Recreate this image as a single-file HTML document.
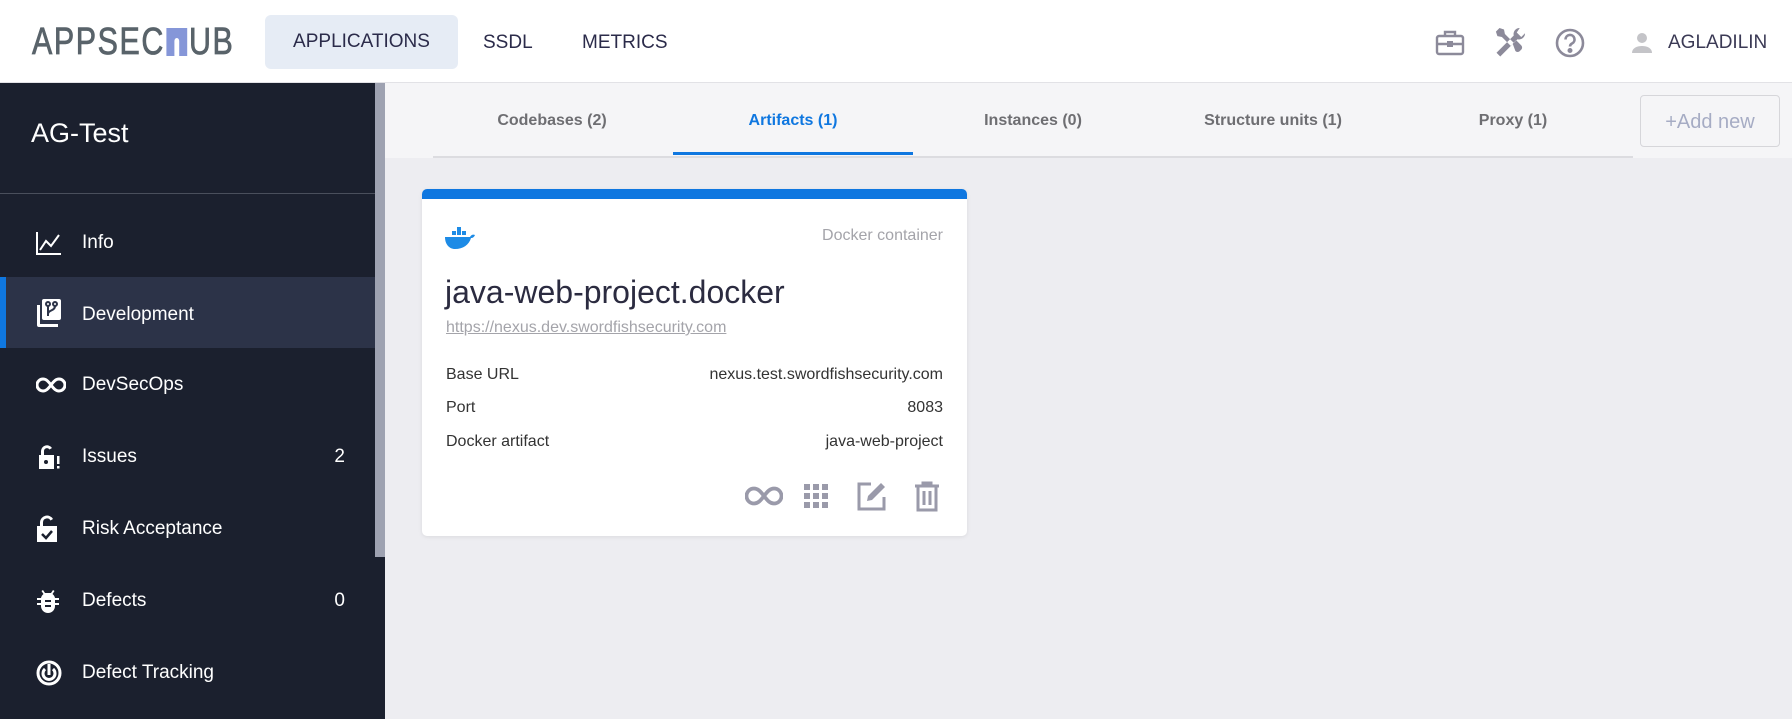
<!DOCTYPE html>
<html><head><meta charset="utf-8"><style>
*{box-sizing:border-box;margin:0;padding:0}
body{width:1792px;height:719px;overflow:hidden;font-family:"Liberation Sans",sans-serif;background:#ededf1;position:relative}
.abs{position:absolute}
#hdr{left:0;top:0;width:1792px;height:83px;background:#fff;border-bottom:1px solid #e2e2e6}
.logo{left:32px;top:21px;font-size:38px;letter-spacing:2px;color:#59636a;transform:scaleX(.8);transform-origin:left;-webkit-text-stroke:.8px #59636a}
.nav{top:16px;height:54px;line-height:54px;font-size:19px;color:#2b2b4a;font-weight:500}
#side{left:0;top:83px;width:385px;height:636px;background:#1b202e}
.mi{position:absolute;left:0;width:375px;height:70px;color:#fff;font-size:19px}
.mi span{position:absolute;left:82px;top:50%;transform:translateY(-50%)}
.mi b{position:absolute;right:30px;top:50%;transform:translateY(-50%);font-weight:normal}
.mi svg{position:absolute;left:36px;top:50%;transform:translateY(-50%)}
#tabs{left:385px;top:83px;width:1407px;height:75px;background:#f5f5f7}
.tab{top:112px;font-size:16px;font-weight:bold;color:#6e6e72;transform:translateX(-50%)}
.card{left:422px;top:189px;width:545px;height:347px;background:#fff;border-radius:5px;box-shadow:0 1px 4px rgba(0,0,0,.08);overflow:hidden}
.row{position:absolute;left:24px;right:24px;font-size:16px;color:#333}
.row i{float:right;font-style:normal}
</style></head><body>
<div id="hdr" class="abs"></div>
<div class="abs logo">APPSEC<span style="display:inline-block;width:26px;height:28px;background:#8596d8;vertical-align:-2px;position:relative;margin:0 2px;-webkit-text-stroke:0"><span style="position:absolute;left:10px;top:10px;width:6px;height:18px;background:#fff;border-radius:3px 3px 0 0"></span></span>UB</div>
<div class="abs nav" style="left:265px;width:193px;background:#e6ecf5;border-radius:6px;text-align:center;top:15px">APPLICATIONS</div>
<div class="abs nav" style="left:483px">SSDL</div>
<div class="abs nav" style="left:582px">METRICS</div>
<svg class="abs" style="left:1435px;top:29px" width="30" height="28" viewBox="0 0 30 28" fill="none" stroke="#8c8a9a" stroke-width="2.4"><rect x="2" y="7" width="26" height="18" rx="2"/><path d="M10 7V3h10v4M2 15h26"/><rect x="12" y="12" width="6" height="6" fill="#8c8a9a" stroke="none"/></svg>
<svg class="abs" style="left:1492px;top:25px" width="36" height="36" viewBox="0 0 24 24" fill="#8c8a9a"><path d="M13.8 12.5l2.3-2.3 3.4 3.4a2 2 0 0 1-.1 2.9l-.9.9a2 2 0 0 1-2.9-.1l-1.8-4.8zM5 2l3 1 .6 3 6 6-2 2-6-6-3-.6-1-3zm13.5 0a4 4 0 0 0-4 5L3 18.5 5.5 21 17 9.5a4 4 0 0 0 5-4l-2.5 2.5-3-3z"/></svg>
<svg class="abs" style="left:1554px;top:27px" width="32" height="32" viewBox="0 0 32 32" fill="none" stroke="#8c8a9a" stroke-width="2.6"><circle cx="16" cy="16" r="13"/><path d="M11.5 12.5a4.5 4.5 0 1 1 6.5 4c-1.5.8-2 1.6-2 3"/><circle cx="16" cy="23.5" r="1.2" fill="#8c8a9a"/></svg>
<svg class="abs" style="left:1631px;top:32px" width="22" height="22" viewBox="0 0 22 22" fill="#c4c4c8"><circle cx="11" cy="6" r="5"/><path d="M1 21c0-5 5-7 10-7s10 2 10 7z"/></svg>
<div class="abs" style="left:1668px;top:32px;font-size:19px;color:#3b3a55;font-weight:500">AGLADILIN</div>

<div id="side" class="abs">
<div class="abs" style="left:31px;top:35px;color:#fff;font-size:27px">AG-Test</div>
<div class="abs" style="left:0;top:110px;width:375px;height:1px;background:#4a4f5c"></div>
<div class="abs" style="left:375px;top:0;width:10px;height:474px;background:#9ea2b1"></div>
<div class="mi" style="top:125px"><svg width="26" height="24" viewBox="0 0 26 24" fill="none" stroke="#fff" stroke-width="2"><path d="M1 1v22h24M4 19l6-9 5 5 8-11"/></svg><span>Info</span></div>
<div class="mi" style="top:194px;height:71px;background:#2c3348"><div class="abs" style="left:0;top:0;width:6px;height:71px;background:#0f77e0"></div><svg width="26" height="30" viewBox="0 0 26 30" fill="#fff"><rect x="6" y="1" width="19" height="21" rx="2"/><path d="M1 7h3v19h18v3H3a2 2 0 0 1-2-2z"/><g stroke="#2c3348" stroke-width="2" fill="none"><circle cx="12" cy="6" r="2"/><circle cx="19" cy="6" r="2"/><path d="M12 8v10M19 8c0 5-7 4-7 8"/></g></svg><span style="margin-top:2px">Development</span></div>
<div class="mi" style="top:267px"><svg width="30" height="16" viewBox="0 0 30 16" fill="none" stroke="#fff" stroke-width="3"><path d="M15 8c-3-4-5-6-8-6a6 6 0 0 0 0 12c3 0 5-2 8-6s5-6 8-6a6 6 0 0 1 0 12c-3 0-5-2-8-6z"/></svg><span>DevSecOps</span></div>
<div class="mi" style="top:339px"><svg width="26" height="26" viewBox="0 0 26 26" fill="#fff"><path d="M5 11V7a6 6 0 0 1 11-3l-2.5 1.5A3 3 0 0 0 8 7v4h10v14H3V11z"/><circle cx="10" cy="18" r="2" fill="#1b202e"/><rect x="21" y="12" width="2.5" height="8"/><rect x="21" y="22" width="2.5" height="2.5"/></svg><span>Issues</span><b>2</b></div>
<div class="mi" style="top:411px"><svg width="22" height="28" viewBox="0 0 22 28" fill="#fff"><path d="M4 11V7a7 7 0 0 1 13-3l-2.5 1.5A4 4 0 0 0 7 7v4h14v16H1V11z"/><path d="M6 19l4 4 6-7" stroke="#1b202e" stroke-width="2.5" fill="none"/></svg><span>Risk Acceptance</span></div>
<div class="mi" style="top:483px"><svg width="24" height="26" viewBox="0 0 24 26" fill="#fff"><path d="M7 2l2 3h6l2-3 1.5 1-2 3A7 7 0 0 1 19 10h4v2h-4v3h4v2h-4v1a7 7 0 0 1-14 0v-1H1v-2h4v-3H1v-2h4a7 7 0 0 1 2.5-4l-2-3z"/><path d="M9 13h6M9 18h6" stroke="#1b202e" stroke-width="2"/></svg><span>Defects</span><b>0</b></div>
<div class="mi" style="top:555px"><svg width="26" height="26" viewBox="0 0 26 26" fill="none" stroke="#fff" stroke-width="3"><circle cx="13" cy="13" r="11"/><path d="M9 9a6 6 0 1 0 8 0M13 4v11"/></svg><span>Defect Tracking</span></div>
</div>

<div id="tabs" class="abs"></div>
<div class="abs" style="left:433px;top:156px;width:1200px;height:2px;background:#dcdce0"></div>
<div class="abs tab" style="left:552px">Codebases (2)</div>
<div class="abs tab" style="left:793px;color:#0f77e0">Artifacts (1)</div>
<div class="abs tab" style="left:1033px">Instances (0)</div>
<div class="abs tab" style="left:1273px">Structure units (1)</div>
<div class="abs tab" style="left:1513px">Proxy (1)</div>
<div class="abs" style="left:673px;top:152px;width:240px;height:3px;background:#0f77e0"></div>
<div class="abs" style="left:1640px;top:95px;width:140px;height:52px;border:1px solid #d6d6da;border-radius:4px;background:#f5f5f7;color:#a6acc4;font-size:20px;text-align:center;line-height:52px">+Add new</div>

<div class="abs card">
<div style="height:10px;background:#0f77e0"></div>
<svg class="abs" style="left:22px;top:38px" width="32" height="24" viewBox="0 0 32 24" fill="#1d8be6"><rect x="8" y="4" width="4" height="4"/><rect x="13" y="4" width="4" height="4"/><rect x="13" y="0" width="4" height="4"/><rect x="18" y="4" width="4" height="4"/><path d="M1 10h25c1-2 3-3 5-2-1 2-2 3-4 3-2 7-8 11-16 11C5 22 1 17 1 10z"/></svg>
<div class="abs" style="right:24px;top:38px;font-size:16px;color:#a4a4aa">Docker container</div>
<div class="abs" style="left:23px;top:85px;font-size:32px;color:#2b2b40">java-web-project.docker</div>
<div class="abs" style="left:24px;top:130px;font-size:16px;color:#a4a4aa;text-decoration:underline">https://nexus.dev.swordfishsecurity.com</div>
<div class="row" style="top:177px">Base URL<i>nexus.test.swordfishsecurity.com</i></div>
<div class="row" style="top:210px">Port<i>8083</i></div>
<div class="row" style="top:244px">Docker artifact<i>java-web-project</i></div>
<svg class="abs" style="left:323px;top:297px" width="38" height="20" viewBox="0 0 30 16" fill="none" stroke="#9a9aaa" stroke-width="3"><path d="M15 8c-3-4-5-6-8-6a6 6 0 0 0 0 12c3 0 5-2 8-6s5-6 8-6a6 6 0 0 1 0 12c-3 0-5-2-8-6z"/></svg>
<svg class="abs" style="left:382px;top:295px" width="24" height="24" viewBox="0 0 24 24" fill="#9a9aaa"><rect x="0" y="0" width="6" height="6"/><rect x="9" y="0" width="6" height="6"/><rect x="18" y="0" width="6" height="6"/><rect x="0" y="9" width="6" height="6"/><rect x="9" y="9" width="6" height="6"/><rect x="18" y="9" width="6" height="6"/><rect x="0" y="18" width="6" height="6"/><rect x="9" y="18" width="6" height="6"/><rect x="18" y="18" width="6" height="6"/></svg>
<svg class="abs" style="left:435px;top:292px" width="30" height="30" viewBox="0 0 30 30" fill="none" stroke="#9a9aaa" stroke-width="3"><path d="M14 3H2v25h25V16"/><path d="M10 20l1-5L24 2l4 4-13 13z" fill="#9a9aaa" stroke="none"/></svg>
<svg class="abs" style="left:492px;top:292px" width="26" height="31" viewBox="0 0 26 31" fill="none" stroke="#9a9aaa" stroke-width="3"><path d="M1 5h24M9 5V2h8v3M4 5v24h18V5M10 10v14M16 10v14"/></svg>
</div>
</body></html>
